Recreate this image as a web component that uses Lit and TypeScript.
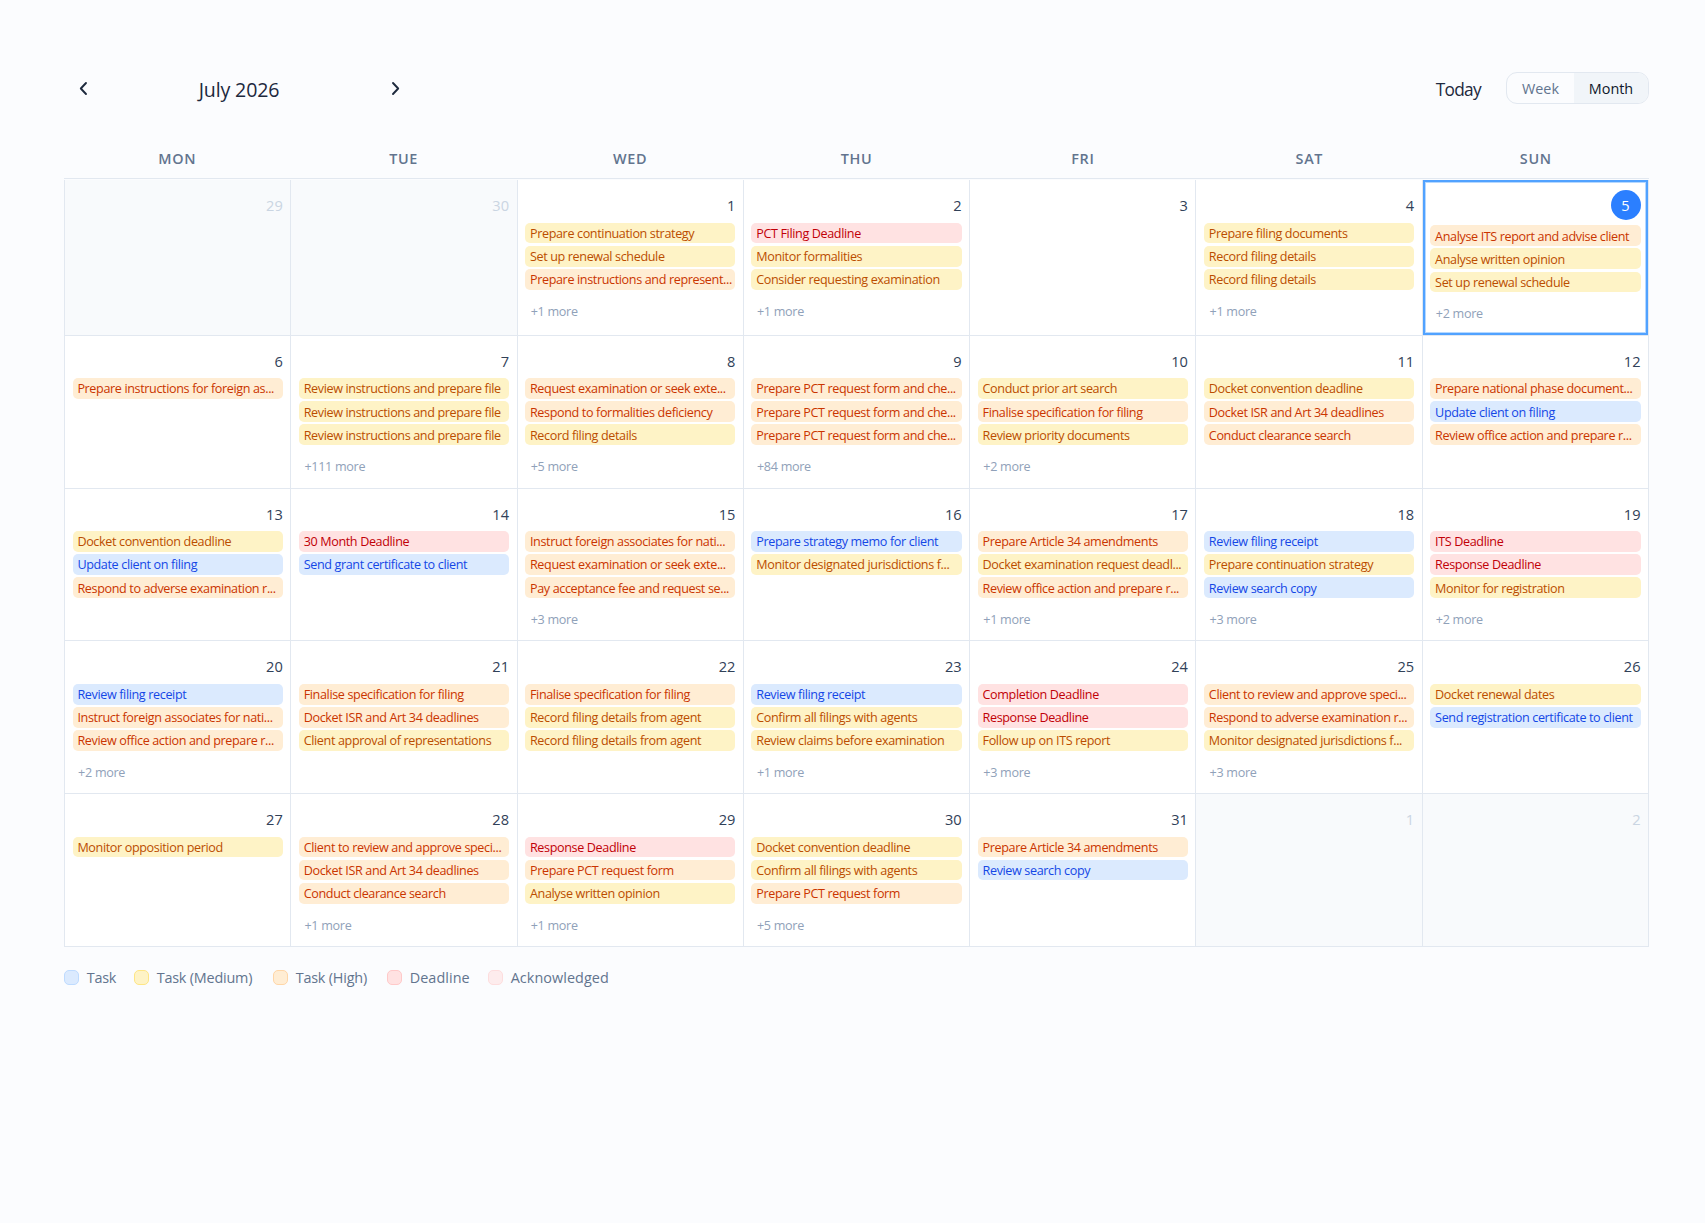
import { LitElement, html, css, svg } from "lit";
import { customElement, property, state } from "lit/decorators.js";
import { classMap } from "lit/directives/class-map.js";

type Kind = "task" | "medium" | "high" | "deadline";
type Entry = [Kind, string];

interface Day {
  n: number;
  outside?: boolean;
  today?: boolean;
  items: Entry[];
  more?: number;
}

const t = (s: string): Entry => ["task", s];
const m = (s: string): Entry => ["medium", s];
const h = (s: string): Entry => ["high", s];
const d = (s: string): Entry => ["deadline", s];
const day = (n: number, items: Entry[] = [], more = 0): Day => ({ n, items, more });

const WEEKDAYS = ["Mon", "Tue", "Wed", "Thu", "Fri", "Sat", "Sun"];

const WEEKS: Day[][] = [
  [
    { n: 29, outside: true, items: [] },
    { n: 30, outside: true, items: [] },
    day(1, [m("Prepare continuation strategy"), m("Set up renewal schedule"), h("Prepare instructions and represent...")], 1),
    day(2, [d("PCT Filing Deadline"), m("Monitor formalities"), m("Consider requesting examination")], 1),
    day(3),
    day(4, [m("Prepare filing documents"), m("Record filing details"), m("Record filing details")], 1),
    { n: 5, today: true, items: [h("Analyse ITS report and advise client"), m("Analyse written opinion"), m("Set up renewal schedule")], more: 2 },
  ],
  [
    day(6, [h("Prepare instructions for foreign as...")]),
    day(7, [m("Review instructions and prepare file"), m("Review instructions and prepare file"), m("Review instructions and prepare file")], 111),
    day(8, [h("Request examination or seek exte..."), h("Respond to formalities deficiency"), m("Record filing details")], 5),
    day(9, [h("Prepare PCT request form and che..."), h("Prepare PCT request form and che..."), h("Prepare PCT request form and che...")], 84),
    day(10, [m("Conduct prior art search"), h("Finalise specification for filing"), m("Review priority documents")], 2),
    day(11, [m("Docket convention deadline"), h("Docket ISR and Art 34 deadlines"), h("Conduct clearance search")]),
    day(12, [h("Prepare national phase document..."), t("Update client on filing"), h("Review office action and prepare r...")]),
  ],
  [
    day(13, [m("Docket convention deadline"), t("Update client on filing"), h("Respond to adverse examination r...")]),
    day(14, [d("30 Month Deadline"), t("Send grant certificate to client")]),
    day(15, [h("Instruct foreign associates for nati..."), h("Request examination or seek exte..."), h("Pay acceptance fee and request se...")], 3),
    day(16, [t("Prepare strategy memo for client"), m("Monitor designated jurisdictions f...")]),
    day(17, [h("Prepare Article 34 amendments"), m("Docket examination request deadl..."), h("Review office action and prepare r...")], 1),
    day(18, [t("Review filing receipt"), m("Prepare continuation strategy"), t("Review search copy")], 3),
    day(19, [d("ITS Deadline"), d("Response Deadline"), m("Monitor for registration")], 2),
  ],
  [
    day(20, [t("Review filing receipt"), h("Instruct foreign associates for nati..."), h("Review office action and prepare r...")], 2),
    day(21, [h("Finalise specification for filing"), h("Docket ISR and Art 34 deadlines"), m("Client approval of representations")]),
    day(22, [h("Finalise specification for filing"), m("Record filing details from agent"), m("Record filing details from agent")]),
    day(23, [t("Review filing receipt"), m("Confirm all filings with agents"), m("Review claims before examination")], 1),
    day(24, [d("Completion Deadline"), d("Response Deadline"), m("Follow up on ITS report")], 3),
    day(25, [h("Client to review and approve speci..."), h("Respond to adverse examination r..."), m("Monitor designated jurisdictions f...")], 3),
    day(26, [m("Docket renewal dates"), t("Send registration certificate to client")]),
  ],
  [
    day(27, [m("Monitor opposition period")]),
    day(28, [h("Client to review and approve speci..."), h("Docket ISR and Art 34 deadlines"), h("Conduct clearance search")], 1),
    day(29, [d("Response Deadline"), h("Prepare PCT request form"), m("Analyse written opinion")], 1),
    day(30, [m("Docket convention deadline"), m("Confirm all filings with agents"), h("Prepare PCT request form")], 5),
    day(31, [h("Prepare Article 34 amendments"), t("Review search copy")]),
    { n: 1, outside: true, items: [] },
    { n: 2, outside: true, items: [] },
  ],
];

@customElement("calendar-day")
class CalendarDay extends LitElement {
  @property({ attribute: false }) day!: Day;

  static styles = css`
    :host { display: block; min-width: 0; }
    .cell {
      box-sizing: border-box;
      height: 100%;
      padding: 9.3px 7.5px 0;
      background: #fff;
      border-right: 1px solid #e2e8f0;
      border-bottom: 1px solid #e2e8f0;
      overflow: hidden;
    }
    .outside { background: #f8fafc; }
    .today { padding-top: 10px; box-shadow: inset 0 0 0 2px #51a2ff, inset 0 0 0 3px #b5d8ff; }
    .head {
      display: flex;
      justify-content: flex-end;
      height: 28.27px;
      margin-bottom: 5px;
      font-size: 14.6px;
      line-height: 32px;
      color: #314158;
    }
    .outside .head { color: #cad5e2; }
    .today .head { height: 30.28px; line-height: 31px; }
    .badge {
      width: 30px;
      height: 30px;
      border-radius: 50%;
      background: #2b7fff;
      color: #fff;
      text-align: center;
    }
    .list { display: flex; flex-direction: column; gap: 2.3px; }
    .pill {
      box-sizing: border-box;
      height: 20.83px;
      padding: 0.27px 0 0 4.9px;
      border-radius: 5px;
      font-size: 12.6px;
      line-height: 21px;
      letter-spacing: -0.37px;
      white-space: nowrap;
      overflow: hidden;
    }
    .task { background: #dbeafe; color: #1447e6; }
    .medium { background: #fef3c6; color: #bb4d00; }
    .high { background: #ffedd4; color: #ca3500; }
    .deadline { background: #ffe2e2; color: #c10007; }
    .more {
      margin-top: 11px;
      padding-left: 5.6px;
      font-size: 12.6px;
      line-height: 21px;
      letter-spacing: -0.3px;
      color: #90a1b9;
    }
  `;

  render() {
    const { n, outside, today, items, more } = this.day;
    return html`
      <div class=${classMap({ cell: true, outside: !!outside, today: !!today })}>
        <div class="head">${today ? html`<span class="badge">${n}</span>` : html`<span>${n}</span>`}</div>
        <div class="list">${items.map(([kind, label]) => html`<div class="pill ${kind}">${label}</div>`)}</div>
        ${more ? html`<div class="more">+${more} more</div>` : null}
      </div>
    `;
  }
}

@customElement("app-root")
class AppRoot extends LitElement {
  @state() private view = "Month";

  static styles = css`
    :host {
      display: block;
      box-sizing: border-box;
      min-height: 1223px;
      padding: 72px 56px 0 64px;
      background: #fbfcfe;
      color: #1d293d;
      font-family: "Open Sans", "Noto Sans", sans-serif;
    }
    .toolbar { display: flex; justify-content: space-between; width: 1585px; height: 32px; }
    .nav { display: flex; align-items: center; justify-content: space-between; width: 351px; }
    .arrow {
      display: flex;
      align-items: center;
      justify-content: center;
      width: 40px;
      height: 33px;
      padding: 0;
      border: 0;
      background: none;
      color: inherit;
    }
    .arrow:first-child { width: 38px; }
    .title { padding: 3px 0 0 1px; font-size: 19.6px; line-height: 32px; letter-spacing: -0.15px; }
    .actions { display: flex; }
    .now { margin-right: 25.2px; padding-top: 2px; font-size: 17.3px; line-height: 32px; letter-spacing: -0.75px; }
    .toggle {
      display: flex;
      box-sizing: border-box;
      width: 143px;
      height: 32px;
      border: 1px solid #e2e8f0;
      border-radius: 11px;
      overflow: hidden;
    }
    .option {
      width: 67px;
      padding: 1px 0 0;
      border: 0;
      background: none;
      font: 14.4px/30px "Open Sans", "Noto Sans", sans-serif;
      color: #62748e;
    }
    .option:last-child { flex: 1; }
    .option.on { background: #f1f5f9; color: #0f172b; }
    .days {
      display: grid;
      grid-template-columns: repeat(7, 1fr);
      width: 1585px;
      height: 39px;
      margin-top: 35px;
      border-bottom: 1px solid #e2e8f0;
    }
    .weekday {
      font-size: 14.4px;
      font-weight: 600;
      line-height: 39px;
      letter-spacing: 0.7px;
      text-align: center;
      text-transform: uppercase;
      color: #62748e;
    }
    .grid {
      display: grid;
      box-sizing: border-box;
      grid-template-columns: repeat(7, 1fr);
      grid-template-rows: 155.6px 152.92px 152.68px 152.8px 152.8px;
      width: 1585px;
      margin-top: 1px;
      border-left: 1px solid #e2e8f0;
    }
    .legend { display: grid; grid-template-columns: 70px 139px 114px 101px auto; margin-top: 20px; }
    .key {
      display: flex;
      align-items: center;
      gap: 7.7px;
      font-size: 14.4px;
      line-height: 22px;
      letter-spacing: -0.2px;
      white-space: nowrap;
      color: #62748e;
    }
    .key:nth-child(n + 4) { letter-spacing: 0.06px; }
    .swatch { box-sizing: border-box; width: 15px; height: 15px; border: 1px solid; border-radius: 5px; }
    .s-task { background: #dbeafe; border-color: #bedbff; }
    .s-medium { background: #fef3c6; border-color: #fee685; }
    .s-high { background: #ffedd4; border-color: #ffd6a7; }
    .s-deadline { background: #ffe2e2; border-color: #ffc9c9; }
    .s-ack { background: #ffe2e2; border-color: #ffc9c9; opacity: 0.6; }
  `;

  private chevron(points: string) {
    return html`<svg width="9" height="15" viewBox="0 0 9 15" fill="none" stroke="currentColor" stroke-width="1.9" stroke-linecap="round" stroke-linejoin="round">
      ${svg`<polyline points=${points}></polyline>`}
    </svg>`;
  }

  render() {
    const keys = [["task", "Task"], ["medium", "Task (Medium)"], ["high", "Task (High)"], ["deadline", "Deadline"], ["ack", "Acknowledged"]];
    return html`
      <div class="toolbar">
        <div class="nav">
          <button class="arrow">${this.chevron("7,2 1.8,7.5 7,13")}</button>
          <span class="title">July 2026</span>
          <button class="arrow">${this.chevron("2,2 7.2,7.5 2,13")}</button>
        </div>
        <div class="actions">
          <span class="now">Today</span>
          <div class="toggle">
            ${["Week", "Month"].map((v) => html`<button class=${classMap({ option: true, on: v === this.view })} @click=${() => (this.view = v)}>${v}</button>`)}
          </div>
        </div>
      </div>
      <div class="days">${WEEKDAYS.map((w) => html`<div class="weekday">${w}</div>`)}</div>
      <div class="grid">${WEEKS.flat().map((x) => html`<calendar-day .day=${x}></calendar-day>`)}</div>
      <div class="legend">
        ${keys.map(([k, label]) => html`<div class="key"><span class="swatch s-${k}"></span>${label}</div>`)}
      </div>
    `;
  }
}
